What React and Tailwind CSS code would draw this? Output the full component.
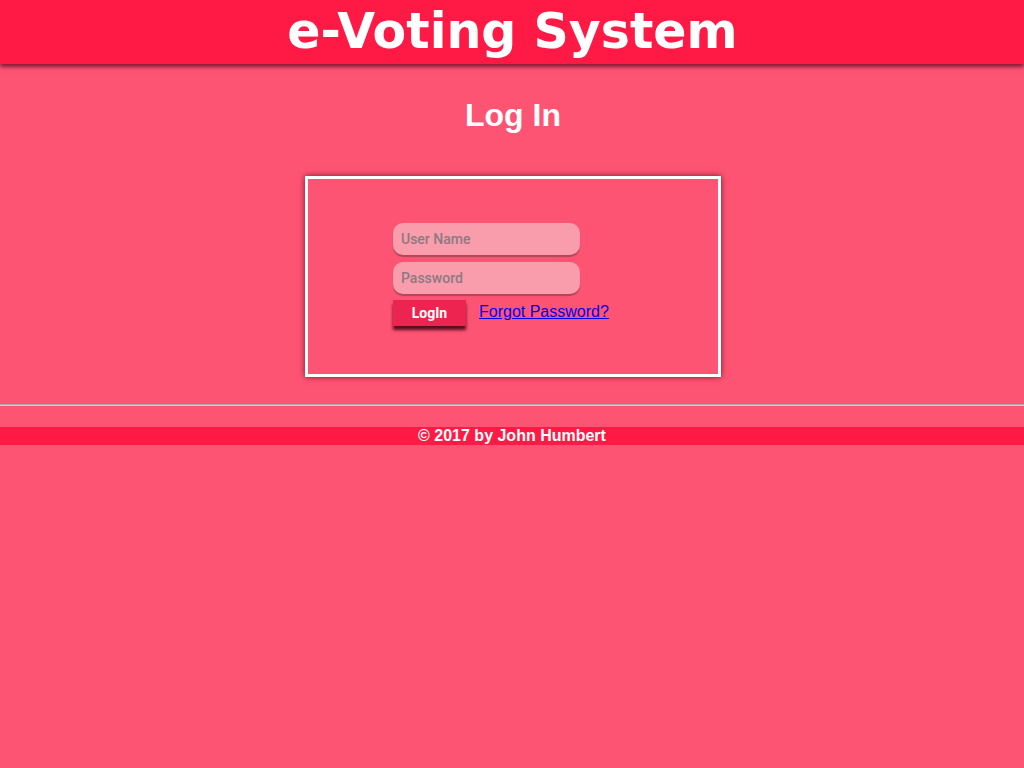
export default function App() {
  return (
    <div className="min-h-[768px] bg-[#fe5473] font-['Liberation_Sans',Arial,sans-serif]">
      <header className="h-[64px] bg-[#ff1a45] shadow-[0_3px_4px_rgba(80,0,20,0.7)] flex items-center justify-center">
        <h1 className="font-['DejaVu_Sans',Verdana,sans-serif] font-bold text-[49px] leading-none text-white -mt-[1px] ml-[1px]">
          e-Voting System
        </h1>
      </header>

      <h2 className="mt-[33px] text-center text-[32px] font-bold text-white leading-[37px] pl-[2px]">Log In</h2>

      <div className="mt-[42px] flex justify-center pl-[2px]">
        <div className="w-[416px] h-[201px] border-[3px] border-white shadow-[0_0_6px_rgba(60,0,15,0.7)] pl-[85px] pt-[44px]">
          <form className="flex flex-col" onSubmit={(e) => e.preventDefault()}>
            <input
              type="text"
              placeholder="User Name"
              className="w-[187px] h-[32px] rounded-[10px] bg-[#f99dad] px-[8px] text-[14px] font-medium text-[#555] placeholder-[#8c7a80] outline-none shadow-[0_2px_1px_rgba(130,60,70,0.6)] font-['Roboto',Arial,sans-serif]"
            />
            <input
              type="password"
              placeholder="Password"
              className="mt-[7px] w-[187px] h-[32px] rounded-[10px] bg-[#f99dad] px-[8px] text-[14px] font-medium text-[#555] placeholder-[#8c7a80] outline-none shadow-[0_2px_1px_rgba(130,60,70,0.6)] font-['Roboto',Arial,sans-serif]"
            />
            <div className="mt-[6px] flex items-start gap-[13px]">
              <button
                type="submit"
                className="w-[73px] h-[26px] bg-[#ee2450] text-white text-[14px] font-bold shadow-[0_4px_3px_rgba(60,0,15,0.85)] font-['Roboto',Arial,sans-serif]"
              >
                LogIn
              </button>
              <a href="#" className="mt-[3px] text-[16px] text-[#0000ee] underline leading-[18px]">
                Forgot Password?
              </a>
            </div>
          </form>
        </div>
      </div>

      <hr className="mt-[27px] border-0 h-[2px] bg-[#c8d0d0] border-t border-t-[#a9a9a9]" />

      <footer className="mt-[21px] h-[18px] bg-[#ff1a45] text-center text-white font-bold text-[16px] leading-[18px]">
        © 2017 by John Humbert
      </footer>
    </div>
  )
}
